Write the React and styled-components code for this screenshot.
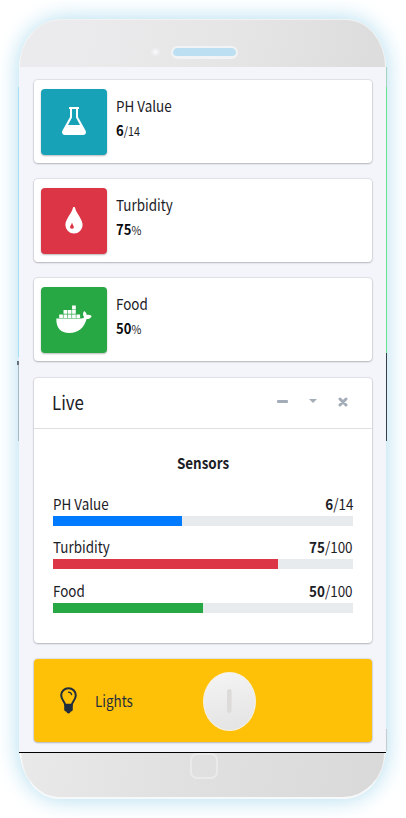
import React from 'react';
import styled, { createGlobalStyle } from 'styled-components';

const GlobalStyle = createGlobalStyle`
  *, *::before, *::after { box-sizing: border-box; }
  body {
    margin: 0;
    background: #fff;
    color: #1b2026;
    font-family: 'Noto Sans CJK SC', 'Open Sans', sans-serif;
    font-size: 15px;
    line-height: 20px;
    overflow: hidden;
  }
`;

const Page = styled.main`
  width: 406px;
  height: 818px;
  padding: 19px 20px 19px 19px;
  overflow: hidden;
`;

const Phone = styled.div`
  width: 367px;
  height: 780px;
  display: flex;
  flex-direction: column;
  border-radius: 46px 42px 44px 44px / 50px 50px 52px 52px;
  box-shadow: 0 0 22px 1px #b3def0;
`;

const TopBezel = styled.header`
  height: 48px;
  display: flex;
  align-items: center;
  padding: 17px 0 0 131px;
  gap: 15px;
  border-radius: 44px 42px 0 0 / 50px 50px 0 0;
  background: linear-gradient(100deg, #ebebed 15%, #e5e5e5 60%, #dddddd 95%);
  border-top: 1px solid #f2f2f3;
  border-left: 1px solid #f4f4f4;
  border-right: 1px solid #f1f1f1;
`;

const Camera = styled.span`
  width: 9px;
  height: 8px;
  border-radius: 50%;
  background: radial-gradient(#fafafa 0 12%, #f0f0f2 35%, #ececee 75%);
`;

const Speaker = styled.span`
  width: 67px;
  height: 13px;
  margin-left: -4px;
  border: 2px solid #f2f3f5;
  border-width: 2px 2px 3px;
  border-radius: 7px;
  background: #bcdff1;
`;

const Screen = styled.section`
  height: 685px;
  padding: 13px 14px 0 15px;
  display: flex;
  flex-direction: column;
  gap: 16px;
  background: #f4f5fa;
  position: relative;
`;

const Edge = styled.i`
  position: absolute;
  width: 1px;
  left: ${p => (p.$side === 'left' ? '-1px' : '367px')};
  top: ${p => p.$top}px;
  height: ${p => p.$height}px;
  background: ${p => p.$color};
`;

const EdgeMark = styled.i`
  position: absolute;
  left: -2px;
  top: 294px;
  width: 2px;
  height: 4px;
  background: #66717a;
`;

const BottomBezel = styled.footer`
  height: 47px;
  border-top: 1px solid #000;
`;

const BottomShell = styled.div`
  height: 46px;
  margin: 0 1px 0 2px;
  display: flex;
  justify-content: center;
  border-bottom: 2px solid #f7f8f9;
  border-right: 1px solid #f0f0f0;
  border-left: 1px solid #f0f0f0;
  border-radius: 0 0 42px 38px / 0 0 46px 46px;
  background: linear-gradient(100deg, #e9e9e9, #e1e1e2 40%, #d9d9d9);
`;

const HomeButton = styled.span`
  width: 28px;
  height: 26px;
  margin-left: 2px;
  border: 2px solid #eaeaea;
  border-radius: 7px;
`;

const Card = styled.article`
  flex: none;
  width: 338px;
  border-radius: 4px;
  background: #fff;
  box-shadow: 0 0 1px 1px rgba(50, 60, 70, 0.11), 0 1px 2px rgba(0, 0, 0, 0.2);
`;

const InfoCard = styled(Card)`
  height: 83px;
  padding: 8px 8px 8px 7px;
  display: flex;
  gap: 9px;
`;

const IconTile = styled.div`
  width: 66px;
  height: 66px;
  margin-top: 1px;
  display: grid;
  place-items: center;
  padding-bottom: 2px;
  border-radius: 4px;
  background: ${p => p.$color};
  color: #fff;
  box-shadow: 0 1px 2px rgba(0, 0, 0, 0.28);
`;

const InfoText = styled.div`
  display: flex;
  flex-direction: column;
  padding-top: 8px;
  gap: 4px;
`;

const Label = styled.span`
  display: block;
  transform: scaleX(0.895);
  transform-origin: ${p => p.$origin || 'left'};
  white-space: nowrap;
`;

const Value = styled(Label)`
  font-size: 14.6px;
  b { color: #090b0e; }
  span { font-size: 12px; }
`;

const LiveCard = styled(Card)`
  height: 265px;
  margin-top: 1px;
`;

const LiveHeader = styled.div`
  height: 51px;
  padding: 0 24px 3px 18px;
  display: flex;
  align-items: center;
  justify-content: space-between;
  border-bottom: 1px solid #dfe0e2;
`;

const Title = styled.h2`
  margin: 0;
  font-size: 19px;
  font-weight: 400;
  line-height: 24px;
  transform: scaleX(0.89);
  transform-origin: left;
`;

const Tools = styled.div`
  display: flex;
  align-items: center;
  gap: 21px;
  color: #a3adb8;
  svg { display: block; }
`;

const LiveBody = styled.div`
  padding: 24px 19px 0 19px;
`;

const Caption = styled.div`
  height: 20px;
  margin-bottom: 21px;
  text-align: center;
  font-weight: 700;
`;

const Meter = styled.div`
  height: 43.3px;
`;

const MeterHead = styled.div`
  height: 20px;
  display: flex;
  justify-content: space-between;
`;

const Track = styled.div`
  height: 10px;
  margin-top: 2px;
  background: #e8ebee;
`;

const Fill = styled.div`
  height: 10px;
  background: ${p => p.$color};
`;

const LightsCard = styled(Card)`
  height: 83px;
  padding-left: 26px;
  display: flex;
  align-items: center;
  background: #ffc107;
  color: #1f2d3d;
`;

const LightsName = styled.div`
  width: 108px;
  margin-left: 18px;
`;

const Knob = styled.button`
  width: 53px;
  height: 59px;
  padding: 0;
  margin-top: 1px;
  display: grid;
  place-items: center;
  border: 1px solid #f6f2e6;
  border-radius: 50%;
  background: linear-gradient(170deg, #f4f4f4, #e3e3e3);
`;

const KnobMark = styled.span`
  width: 5px;
  height: 24px;
  border-radius: 3px;
  background: #dddada;
  border-right: 1px solid #e5e1e1;
`;

const Flask = () => (
  <svg width="24" height="28" viewBox="0 0 24 28" fill="currentColor">
    <path fillRule="evenodd" d="M7 0h10v2h-1v8l7.500 13.500C24.700 26 23.500 28 21 28H3C.5 28-.7 26 .5 23.500L8 10V2H7zM10 2v8.600L6 18h12l-4-7.400V2z" />
  </svg>
);

const Drop = () => (
  <svg width="18" height="27" viewBox="0 0 18 27" fill="currentColor">
    <path fillRule="evenodd" d="M9 0c-.7 0-1 .5-1.200 1.200C6.300 7 .4 12 .4 18A8.600 8.600 0 0 0 17.600 18C17.600 12 11.700 7 10.200 1.200 10 .5 9.700 0 9 0zM7 15.500c.5 2.200 1.900 3.300 1.900 4.700a2 2 0 0 1-3.900 0c0-1.400 1.500-2.500 2-4.700z" />
  </svg>
);

const Whale = () => (
  <svg width="36" height="28" viewBox="0 0 36 28" fill="currentColor">
    <path d="M.4 13.500h25c1.900 0 2.500-.6 2.700-1.400-1.500-2-1.400-4.100.1-6.100 1.700 1.200 2.300 2.400 2.500 3.900 1.700-.4 3.500-.1 5 1-1 2.200-2.700 3.100-5.100 3.100C28.200 22.500 22.600 28 13.200 28 4.300 28-.1 22.500.4 13.500z" />
    <path d="M3.200 9.400h3.700V13H3.200zM7.500 9.400h3.700V13H7.500zM11.800 9.400h3.700V13h-3.700zM16.100 9.400h3.700V13h-3.700zM20.400 9.400h3.700V13h-3.700zM7.500 5.100h3.700v3.700H7.500zM11.800 5.100h3.700v3.700h-3.700zM16.100 5.100h3.700v3.700h-3.700zM16.100.5h3.700v4h-3.700z" />
  </svg>
);

const Bulb = () => (
  <svg width="17" height="27" viewBox="0 0 17 27" fill="none" stroke="currentColor">
    <path d="M5.200 17.800C4.700 14.500 1.200 12.700 1.200 8.300a7.300 7.100 0 0 1 14.600 0c0 4.400-3.500 6.200-4 9.500z" strokeWidth="2" />
    <path d="M8.500 5.200c1.500 0 2.800 1 3.100 2.400" strokeWidth="1.300" strokeLinecap="round" />
    <path d="M4.200 17.500h8.600v5.300c0 1-1.400 1.800-2.300 2-.3 1.100-1 1.700-2 1.700s-1.700-.6-2-1.700c-.9-.2-2.300-1-2.300-2z" fill="currentColor" stroke="none" />
  </svg>
);

const sensors = [
  { name: 'PH Value', value: 6, max: 14, unit: '/14', color: '#17a2b8', bar: '#007bff', icon: <Flask /> },
  { name: 'Turbidity', value: 75, max: 100, unit: '%', color: '#dc3545', bar: '#dc3545', icon: <Drop /> },
  { name: 'Food', value: 50, max: 100, unit: '%', color: '#28a745', bar: '#28a745', icon: <Whale /> },
];

export default function App() {
  return (
    <Page>
      <GlobalStyle />
      <Phone>
        <TopBezel><Camera /><Speaker /></TopBezel>
        <Screen>
          <Edge $side="left" $top={20} $height={270} $color="#a3e0f5" />
          <Edge $side="left" $top={294} $height={80} $color="#a5b9c5" />
          <EdgeMark />
          <Edge $side="right" $top={0} $height={20} $color="#a4d3be" />
          <Edge $side="right" $top={20} $height={266} $color="#67e58d" />
          <Edge $side="right" $top={286} $height={88} $color="#35404c" />
          <Edge $side="right" $top={662} $height={22} $color="#c8cbcd" />
          {sensors.map(s => (
            <InfoCard key={s.name}>
              <IconTile $color={s.color}>{s.icon}</IconTile>
              <InfoText>
                <Label>{s.name}</Label>
                <Value><b>{s.value}</b><span>{s.unit}</span></Value>
              </InfoText>
            </InfoCard>
          ))}
          <LiveCard>
            <LiveHeader>
              <Title>Live</Title>
              <Tools>
                <svg width="11" height="4" viewBox="0 0 11 4"><rect width="11" height="3" rx="1" fill="currentColor" /></svg>
                <svg width="8" height="6" viewBox="0 0 8 6"><path d="M0 0h8L4 4z" fill="currentColor" /></svg>
                <svg width="10" height="10" viewBox="0 0 10 10"><path d="M2 2l6 6M8 2L2 8" stroke="currentColor" strokeWidth="3" strokeLinecap="round" /></svg>
              </Tools>
            </LiveHeader>
            <LiveBody>
              <Caption><Label $origin="center">Sensors</Label></Caption>
              {sensors.map(s => (
                <Meter key={s.name}>
                  <MeterHead>
                    <Label>{s.name}</Label>
                    <Label $origin="right"><b>{s.value}</b>/{s.max}</Label>
                  </MeterHead>
                  <Track><Fill $color={s.bar} style={{ width: `${(s.value / s.max) * 100}%` }} /></Track>
                </Meter>
              ))}
            </LiveBody>
          </LiveCard>
          <LightsCard>
            <Bulb />
            <LightsName><Label>Lights</Label></LightsName>
            <Knob aria-label="Toggle lights"><KnobMark /></Knob>
          </LightsCard>
        </Screen>
        <BottomBezel><BottomShell><HomeButton /></BottomShell></BottomBezel>
      </Phone>
    </Page>
  );
}
